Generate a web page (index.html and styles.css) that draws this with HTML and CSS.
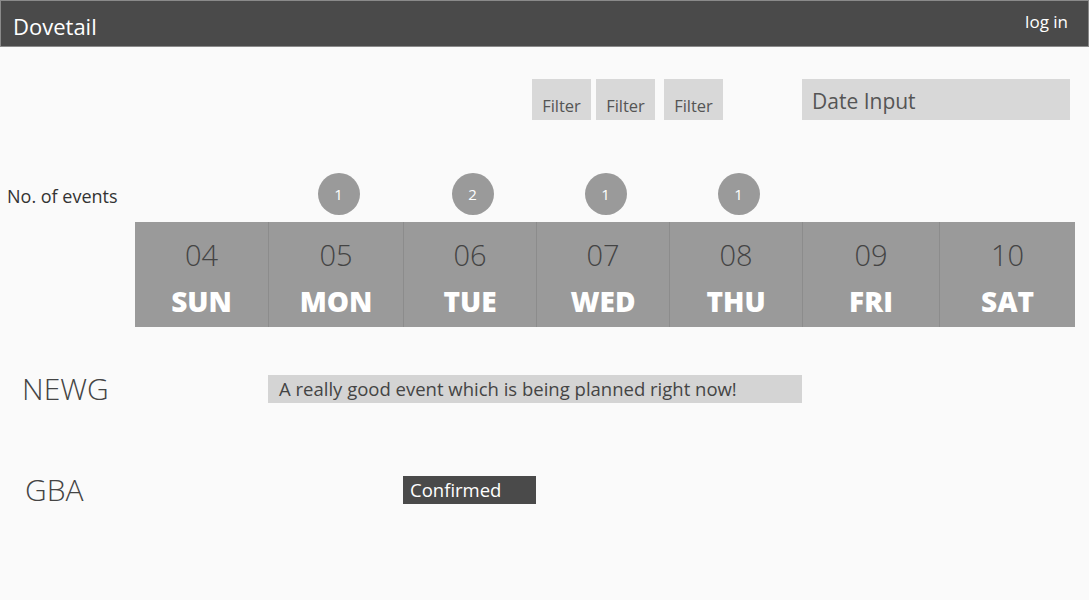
FILE: index.html
```html
<!DOCTYPE html>
<html>
<head>
<meta charset="utf-8">
<title>Dovetail</title>
<link rel="stylesheet" href="styles.css">
</head>
<body>
<header class="topbar">
  <div class="brand">Dovetail</div>
  <div class="login">log in</div>
</header>
<div class="toolbar">
  <div class="filters">
    <button class="filter">Filter</button>
    <button class="filter">Filter</button>
    <button class="filter filter-last">Filter</button>
  </div>
  <div class="date-input">Date Input</div>
</div>
<main class="calendar">
  <div class="count-label">No. of events</div>
  <div class="count-cell"></div>
  <div class="count-cell"><span class="badge">1</span></div>
  <div class="count-cell"><span class="badge">2</span></div>
  <div class="count-cell"><span class="badge">1</span></div>
  <div class="count-cell"><span class="badge">1</span></div>
  <div class="count-cell"></div>
  <div class="count-cell"></div>

  <div class="days">
    <div class="day"><span class="num">04</span><span class="name">SUN</span></div>
    <div class="day"><span class="num">05</span><span class="name">MON</span></div>
    <div class="day"><span class="num">06</span><span class="name">TUE</span></div>
    <div class="day"><span class="num">07</span><span class="name">WED</span></div>
    <div class="day"><span class="num">08</span><span class="name">THU</span></div>
    <div class="day"><span class="num">09</span><span class="name">FRI</span></div>
    <div class="day"><span class="num">10</span><span class="name">SAT</span></div>
  </div>

  <div class="group group-newg">NEWG</div>
  <div class="event event-planned">A really good event which is being planned right now!</div>

  <div class="group group-gba">GBA</div>
  <div class="event event-confirmed">Confirmed</div>
</main>
</body>
</html>
```
FILE: styles.css
```css
* { box-sizing: border-box; }
html, body { margin: 0; padding: 0; }
body {
  background: #fafafa;
  font-family: "Open Sans", "Noto Sans", sans-serif;
  color: #444;
  width: 1089px;
  height: 600px;
  overflow: hidden;
}
.topbar {
  height: 47px;
  background: #4a4a4a;
  border: 1px solid #8a8a8a;
  display: flex;
  justify-content: space-between;
  align-items: flex-start;
  color: #fff;
}
.brand {
  font-size: 22px;
  padding: 10px 0 0 12px;
  line-height: 30px;
}
.login {
  font-size: 17px;
  padding: 7px 20px 0 0;
  line-height: 28px;
}
.toolbar {
  display: flex;
  align-items: flex-start;
  padding: 32px 0 0 532px;
  height: 120px;
}
.filters { display: flex; gap: 5px; }
.filter {
  width: 59px;
  height: 41px;
  border: 0;
  background: #d8d8d8;
  color: #555;
  font-family: inherit;
  font-size: 16.5px;
  padding: 12px 0 0;
  margin: 0;
}
.filter-last { margin-left: 4px; }
.date-input {
  margin-left: 79px;
  width: 268px;
  height: 41px;
  background: #d8d8d8;
  color: #555;
  font-size: 21px;
  line-height: 28px;
  padding: 8px 0 0 10px;
}
.calendar {
  display: grid;
  grid-template-columns: 135px 133px 135px 133px 133px 133px 137px 136px;
  grid-template-rows: 49px 105px 48px 28px 73px 28px;
  width: 1075px;
  margin-top: 6px;
}
.count-label {
  font-size: 18px;
  line-height: 26px;
  color: #333;
  padding-left: 7px;
  padding-top: 10px;
}
.count-cell {
  display: flex;
  justify-content: center;
  align-items: flex-start;
}
.badge {
  width: 42px;
  height: 42px;
  border-radius: 50%;
  background: #9a9a9a;
  color: #fff;
  font-size: 15px;
  display: flex;
  align-items: center;
  justify-content: center;
  margin-left: 6px;
}
.days {
  grid-column: 2 / 10;
  grid-row: 2;
  display: grid;
  grid-template-columns: subgrid;
  background: #9a9a9a;
}
.day {
  display: flex;
  flex-direction: column;
  align-items: center;
  border-left: 1px solid #8c8c8c;
}
.day:first-child { border-left: 0; }
.num {
  font-size: 29px;
  font-weight: 300;
  color: #444;
  line-height: 36px;
  margin-top: 15px;
}
.name {
  font-size: 28px;
  font-weight: 800;
  color: #fff;
  line-height: 36px;
  margin-top: 10px;
}
.group {
  grid-column: 1;
  font-size: 30px;
  font-weight: 300;
  color: #444;
  line-height: 28px;
}
.group-newg { grid-row: 4; padding-left: 22px; }
.group-gba { grid-row: 6; padding-left: 25px; }
.event {
  font-size: 18.5px;
  line-height: 28px;
  white-space: nowrap;
}
.event-planned {
  grid-row: 4;
  grid-column: 3 / 7;
  background: #d4d4d4;
  color: #444;
  padding-left: 11px;
}
.event-confirmed {
  grid-row: 6;
  grid-column: 4;
  background: #4a4a4a;
  color: #fff;
  padding-left: 7px;
}
```
